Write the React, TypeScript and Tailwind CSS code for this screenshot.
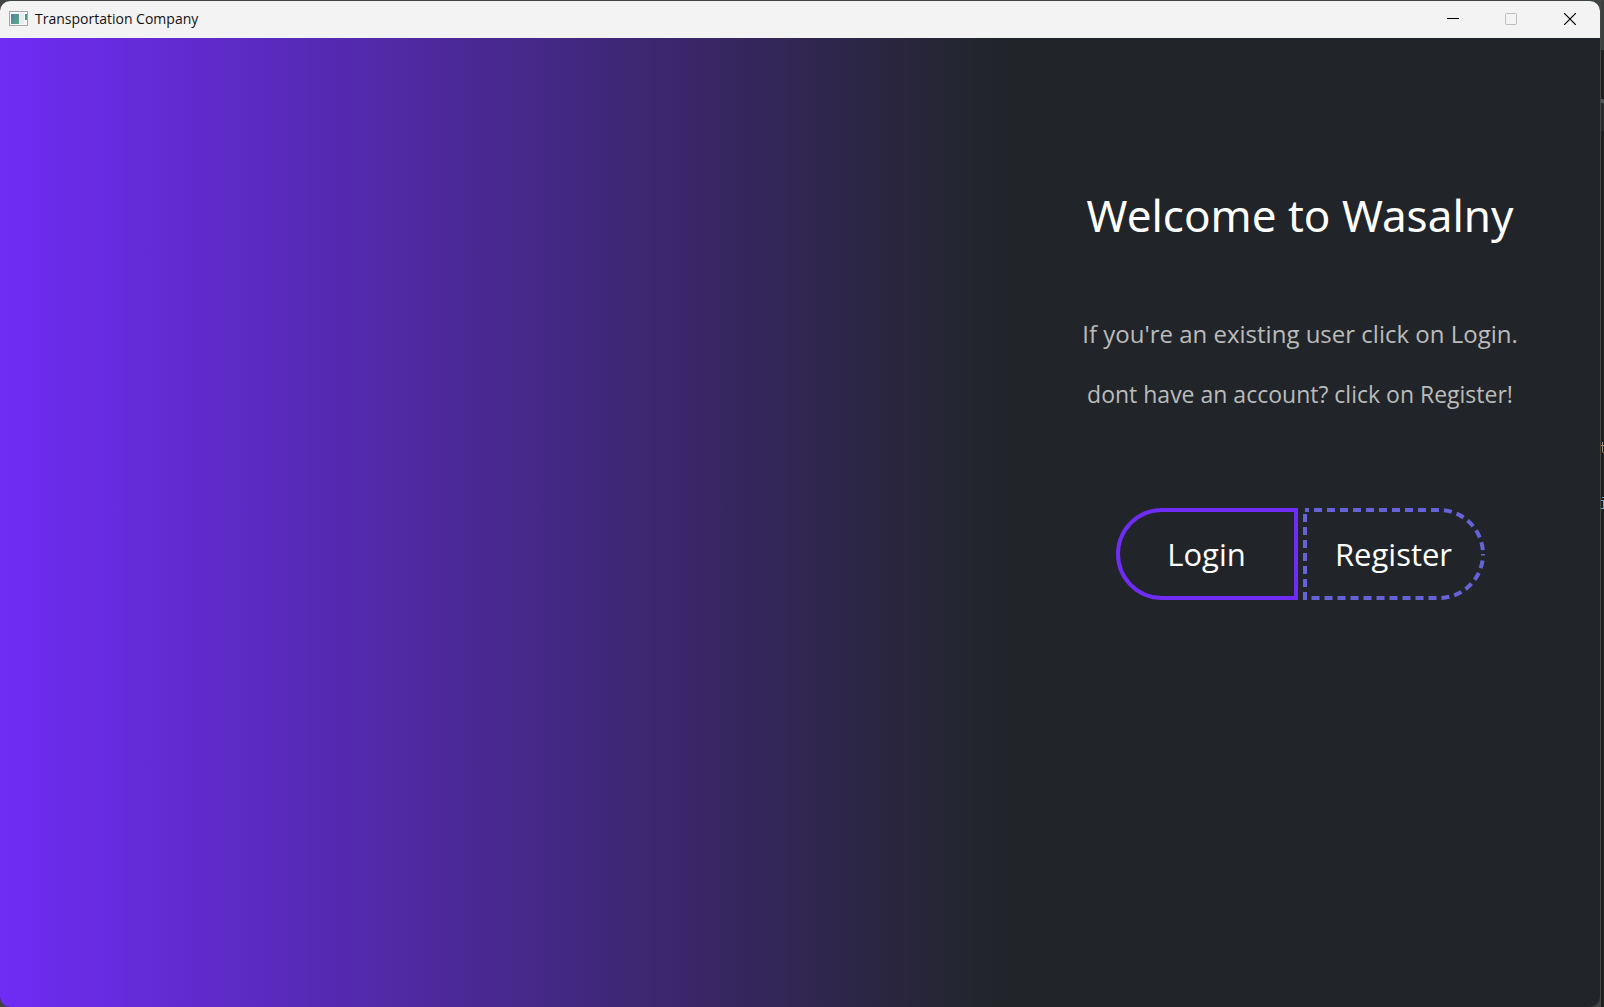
import React from "react";

function AppIcon() {
  return (
    <svg width="19" height="16" viewBox="0 0 19 16" aria-hidden="true">
      <defs>
        <linearGradient id="pane" x1="0" y1="0" x2="1" y2="1">
          <stop offset="0" stopColor="#4f7fae" />
          <stop offset="1" stopColor="#5cae7c" />
        </linearGradient>
      </defs>
      <rect x="0.5" y="0.5" width="18" height="14" fill="#f8f8f8" stroke="#a3a8ad" />
      <rect x="2" y="3" width="8" height="10" fill="url(#pane)" />
      <rect x="11" y="3" width="4" height="10" fill="#e9ebed" />
      <rect x="16" y="3" width="2" height="6" fill="url(#pane)" />
    </svg>
  );
}

function TitleBar() {
  return (
    <header className="flex h-[37px] shrink-0 items-center bg-[#f3f3f3] pb-px pl-[9px] text-[#111111]">
      <AppIcon />
      <h1 className="ml-[7px] flex-1 text-[14px] leading-5">Transportation Company</h1>
      <button aria-label="Minimize" className="flex h-9 w-[58px] items-center justify-center">
        <svg width="12" height="12" viewBox="0 0 12 12" stroke="#000" fill="none">
          <path d="M0 5.5H12" />
        </svg>
      </button>
      <button aria-label="Maximize" disabled className="flex h-9 w-[58px] items-center justify-center">
        <svg width="12" height="12" viewBox="0 0 12 12" stroke="#bdbdbd" fill="none">
          <rect x="0.5" y="0.5" width="11" height="11" rx="1" />
        </svg>
      </button>
      <button aria-label="Close" className="flex h-9 w-[60px] items-center justify-center">
        <svg width="12" height="12" viewBox="0 0 12 12" stroke="#000" strokeWidth="1.2" fill="none">
          <path d="M0 0L12 12M12 0L0 12" />
        </svg>
      </button>
    </header>
  );
}

function DashedOutline() {
  return (
    <svg
      className="absolute inset-0"
      width="182"
      height="92"
      viewBox="0 0 182 92"
      fill="none"
      stroke="#6663d9"
      strokeWidth="4"
      strokeDasharray="8 5"
      aria-hidden="true"
    >
      <path d="M2 2H136A44 44 0 0 1 180 46" strokeDashoffset="4" />
      <path d="M2 90H136A44 44 0 0 0 180 46" strokeDashoffset="6.5" />
      <path d="M2 2V92" strokeDashoffset="9" />
    </svg>
  );
}

/* Sliver of the editor window that shows behind the right edge. */
function EditorEdge() {
  return (
    <div className="flex w-1 shrink-0 flex-col overflow-hidden border-l border-[#444748] bg-[#1e1e1e]" aria-hidden="true">
      <div className="h-[49px] bg-[#3c403f]" />
      <div className="mt-[49px] h-1 bg-[#555859]" />
      <div className="h-7 bg-[#282a2c]" />
      <svg className="mt-[310px]" width="3" height="68" viewBox="0 0 3 68" fill="none">
        <path d="M0 4.5H3M1.5 1V11L3 12" stroke="#b08a6c" />
        <path d="M1 56.5H3M0 59.5H3M2.5 60V67M0 67.5H3" stroke="#7fa3c4" />
      </svg>
    </div>
  );
}

export default function App() {
  return (
    <div className="flex min-h-screen bg-[#414541] pt-px font-['Open_Sans','Noto_Sans',sans-serif]">
      <div className="flex flex-1 flex-col overflow-hidden rounded-[10px] bg-[#212529]">
        <TitleBar />
        <main className="flex flex-1">
          <div className="w-5/8 bg-linear-to-r/srgb from-[#6f2cf5] to-[#212529]" />
          <section className="flex flex-1 flex-col items-center pt-[145px] text-center">
            <h2 className="font-['Noto_Sans',sans-serif] text-[44px] leading-[64px] text-white">Welcome to Wasalny</h2>
            <p className="mt-[69px] text-[24px] leading-9 text-[#bbbbbb]">
              If you're an existing user click on Login.
            </p>
            <p className="mt-6 text-[23px] leading-9 text-[#bbbbbb]">
              dont have an account? click on Register!
            </p>
            <div className="mt-24 flex gap-[5px] text-[31px] text-white">
              <button className="h-[92px] w-[182px] rounded-l-full border-4 border-[#6f2cf5]">Login</button>
              <button className="relative h-[92px] w-[182px] rounded-r-full">
                <DashedOutline />
                Register
              </button>
            </div>
          </section>
        </main>
      </div>
      <EditorEdge />
    </div>
  );
}
